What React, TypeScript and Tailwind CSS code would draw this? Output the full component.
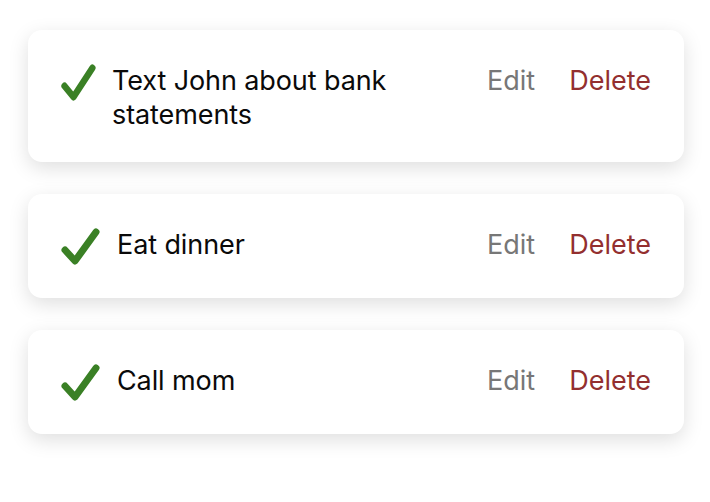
import React from "react";

function Check({ w }: { w: number }) {
  return (
    <svg width={w} height={40} viewBox="0 0 40 40" className="shrink-0" preserveAspectRatio="none">
      <path d="M5 24 L15 35 L36 6" fill="none" stroke="#3a8025" strokeWidth={7} strokeLinecap="round" strokeLinejoin="round" />
    </svg>
  );
}

const items = [
  { text: "Text John about bank statements", cw: 36, gap: "gap-4", textW: "max-w-[300px]" },
  { text: "Eat dinner", cw: 40, gap: "gap-[17px]", textW: "" },
  { text: "Call mom", cw: 40, gap: "gap-[17px]", textW: "" },
];

export default function App() {
  return (
    <div className="w-[710px] h-[502px] bg-white pt-[30px] pl-[28px] pr-[26px] flex flex-col gap-8" style={{ fontFamily: "Inter, 'Noto Sans', sans-serif" }}>
      {items.map((it, i) => (
        <div key={i} className="bg-white rounded-[14px] shadow-[0_6px_20px_rgba(0,0,0,0.13)] pl-8 pr-[32px] py-8 flex items-start justify-between">
          <div className={`flex items-start ${it.gap}`}>
            <Check w={it.cw} />
            <div className={`text-[27px] leading-[34px] translate-y-[2px] text-[#0a0a0a] tracking-[-0.1px] ${it.textW}`}>{it.text}</div>
          </div>
          <div className="flex items-start gap-[34px] text-[27px] leading-[34px] translate-y-[2px] -translate-x-[1px]">
            <span className="text-[#777]">Edit</span>
            <span className="text-[#932f2f]">Delete</span>
          </div>
        </div>
      ))}
    </div>
  );
}
